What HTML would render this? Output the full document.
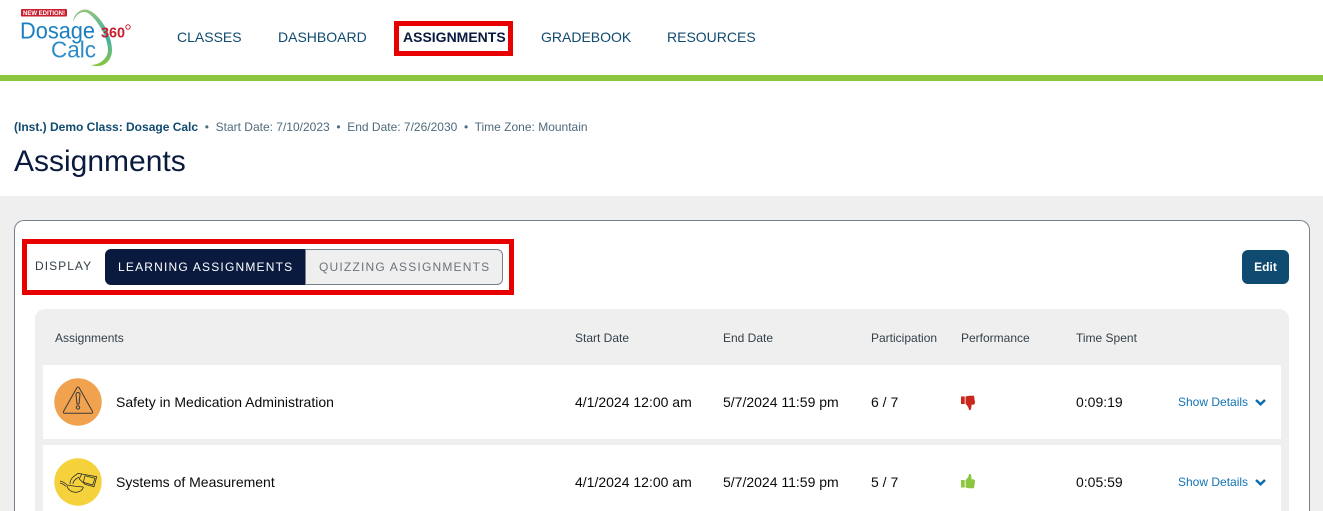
<!DOCTYPE html>
<html>
<head>
<meta charset="utf-8">
<style>
html,body{margin:0;padding:0;background:#fff;width:1323px;height:511px;overflow:hidden}
#w{position:relative;width:1323px;height:511px;overflow:hidden;font-family:"Liberation Sans",sans-serif;background:#fff}
.a{position:absolute;white-space:nowrap}
.nav{top:29px;font-size:14px;line-height:16px;color:#0f4a70}
.th{top:331px;font-size:12px;line-height:14px;color:#333f48}
.td{font-size:14px;line-height:16px;color:#0a0a0a}
.sd{font-size:12px;line-height:14px;color:#1273b5}
</style>
</head>
<body>
<div id="w">
<svg class="a" style="left:15px;top:5px" width="125" height="66" viewBox="15 5 125 66">
<defs>
<linearGradient id="g1" x1="0" y1="0" x2="0" y2="1"><stop offset="0" stop-color="#94c47c"/><stop offset=".5" stop-color="#3fb0a8"/><stop offset="1" stop-color="#8cc63f"/></linearGradient>
</defs>
<rect x="21" y="9" width="46" height="7.500" rx="1" fill="#c8202f"/>
<text x="23" y="15" font-family="Liberation Sans" font-size="6" font-weight="bold" fill="#fff" textLength="42">NEW EDITION!</text>
<path d="M73 22C74 13 82 8 88 10C100 14 112 35 112 50C112 62 102 69 91 65C100 65 108 58 108 50C108 38 98 20 88 13C82 10 76 14 73 22Z" fill="url(#g1)"/>
<text x="20" y="38.500" font-family="Liberation Sans" font-size="23" fill="#1b7ec2" textLength="75" lengthAdjust="spacingAndGlyphs">Dosage</text>
<text x="51" y="57.500" font-family="Liberation Sans" font-size="23" fill="#2b8cc8" textLength="45" lengthAdjust="spacingAndGlyphs">Calc</text>
<text x="101" y="37.500" font-family="Liberation Sans" font-size="14.500" font-weight="bold" fill="#c8202f" textLength="24" lengthAdjust="spacingAndGlyphs">360</text>
<circle cx="128" cy="27" r="2.200" fill="none" stroke="#c8202f" stroke-width="1"/>
</svg>

<div class="a nav" style="left:177px">CLASSES</div>
<div class="a nav" style="left:278px">DASHBOARD</div>
<div class="a" style="left:394px;top:21px;width:109px;height:25px;border:5px solid #e60000"></div>
<div class="a nav" style="left:403px;font-weight:bold;color:#0a1a3f">ASSIGNMENTS</div>
<div class="a nav" style="left:541px">GRADEBOOK</div>
<div class="a nav" style="left:667px">RESOURCES</div>
<div class="a" style="left:0;top:75px;width:1323px;height:6px;background:#8cc63f"></div>

<div class="a" style="left:14px;top:120px;font-size:12px;line-height:14px;color:#4f6a7d"><b style="color:#0f4a70">(Inst.) Demo Class: Dosage Calc</b>&nbsp; •&nbsp; Start Date: 7/10/2023&nbsp; •&nbsp; End Date: 7/26/2030&nbsp; •&nbsp; Time Zone: Mountain</div>
<div class="a" style="left:14px;top:145px;font-size:30px;line-height:34px;color:#0a1a3f">Assignments</div>

<div class="a" style="left:0;top:196px;width:1323px;height:315px;background:#efefef"></div>
<div class="a" style="left:14px;top:220px;width:1294px;height:290px;background:#fff;border:1px solid #75828c;border-bottom:none;border-radius:10px 10px 0 0"></div>

<div class="a" style="left:22px;top:239px;width:482px;height:46px;border:5px solid #e60000"></div>
<div class="a" style="left:35px;top:259px;font-size:12px;line-height:14px;letter-spacing:1.050px;color:#333f48">DISPLAY</div>
<div class="a" style="left:105px;top:249px;width:200px;height:36px;background:#0a1a3f;border-radius:6px 0 0 6px"></div>
<div class="a" style="left:118px;top:249px;color:#fff;font-size:12px;line-height:36px;letter-spacing:1.200px">LEARNING ASSIGNMENTS</div>
<div class="a" style="left:305px;top:249px;width:196px;height:34px;background:#efefef;border:1px solid #75828c;border-radius:0 6px 6px 0"></div>
<div class="a" style="left:319px;top:250px;color:#6a747c;font-size:12px;line-height:34px;letter-spacing:1.200px">QUIZZING ASSIGNMENTS</div>

<div class="a" style="left:1242px;top:250px;width:47px;height:34px;background:#0f4a70;border-radius:6px;color:#fff;font-size:12px;font-weight:bold;line-height:34px;text-align:center">Edit</div>

<div class="a" style="left:35px;top:309px;width:1254px;height:202px;background:#efefef;border-radius:10px 10px 0 0"></div>
<div class="a th" style="left:55px">Assignments</div>
<div class="a th" style="left:575px">Start Date</div>
<div class="a th" style="left:723px">End Date</div>
<div class="a th" style="left:871px">Participation</div>
<div class="a th" style="left:961px">Performance</div>
<div class="a th" style="left:1076px">Time Spent</div>

<div class="a" style="left:43px;top:365px;width:1238px;height:74px;background:#fff"></div>
<div class="a" style="left:43px;top:445px;width:1238px;height:66px;background:#fff"></div>

<svg class="a" style="left:54px;top:378px" width="48" height="48" viewBox="0 0 48 48">
<circle cx="24" cy="24" r="23.700" fill="#f0a24e"/>
<path d="M23 9.500a1.200 1.200 0 0 1 2 0L38.500 33.500a1.200 1.200 0 0 1-1 1.800H10.500a1.200 1.200 0 0 1-1-1.800Z" fill="none" stroke="#3a3a3a" stroke-width="1"/>
<path d="M22 16.500a2 2 0 0 1 4 0L25 26h-2Z" fill="none" stroke="#3a3a3a" stroke-width="1"/>
<circle cx="24" cy="29.500" r="1.700" fill="none" stroke="#3a3a3a" stroke-width="1"/>
</svg>
<div class="a td" style="left:116px;top:394px">Safety in Medication Administration</div>
<div class="a td" style="left:575px;top:394px">4/1/2024 12:00 am</div>
<div class="a td" style="left:723px;top:394px">5/7/2024 11:59 pm</div>
<div class="a td" style="left:871px;top:394px">6 / 7</div>
<svg class="a" style="left:961px;top:395px" width="15" height="16" viewBox="0 0 15 16">
<path d="M0 1.500h3.500V9H0Z" fill="#c8281c"/><path d="M3.500 1.500h1.500V9H3.500Z" fill="#e8a090"/>
<path d="M5 1.500C6.500 .8 9 .6 11 .8H13L14 7.500C14 9 13 9.800 11.500 9.800H10.500C10.500 12 10.300 14 9.500 15C8.500 15.500 8 15 7.800 14C7.500 12.500 6.500 10.500 5 9.500Z" fill="#c8281c"/>
</svg>
<div class="a td" style="left:1076px;top:394px">0:09:19</div>
<div class="a sd" style="left:1178px;top:395px">Show Details</div>
<svg class="a" style="left:1254px;top:398px" width="13" height="9" viewBox="0 0 13 9"><path d="M2 2L6.500 6.300L11 2" fill="none" stroke="#0f6cab" stroke-width="2.500"/></svg>

<svg class="a" style="left:54px;top:458px" width="48" height="48" viewBox="0 0 48 48">
<circle cx="24" cy="24" r="23.700" fill="#f5d23c"/>
<g fill="none" stroke="#2d2d2d" stroke-width=".8">
<path d="M6 23C9 23.500 11 25 13 27C18 28 24 28.500 29 29"/>
<path d="M6 25C8.500 25.500 10 26.500 12 28.500"/>
<path d="M13 28C14 32 18 34.500 22 34.300C26 34 28.500 32 29.500 29"/>
<path d="M16 26C16 23 17 21 19 19L24 15.300L28 16"/>
<path d="M19 26C19 24 20 22.500 22 21L25 19"/>
<path d="M27.700 16L42.700 18.700L40 28.700L31 26.300L25.300 21Z"/>
<path d="M31 17.700L41 20.300L38.700 27L29.300 24.300Z"/>
</g>
</svg>
<div class="a td" style="left:116px;top:474px">Systems of Measurement</div>
<div class="a td" style="left:575px;top:474px">4/1/2024 12:00 am</div>
<div class="a td" style="left:723px;top:474px">5/7/2024 11:59 pm</div>
<div class="a td" style="left:871px;top:474px">5 / 7</div>
<svg class="a" style="left:961px;top:474px" width="15" height="16" viewBox="0 0 15 16">
<g transform="matrix(1 0 0 -1 0 15)">
<path d="M0 1.500h3.500V9H0Z" fill="#8cc63f"/><path d="M3.500 1.500h1.500V9H3.500Z" fill="#d0e8a8"/>
<path d="M5 1.500C6.500 .8 9 .6 11 .8H13L14 7.500C14 9 13 9.800 11.500 9.800H10.500C10.500 12 10.300 14 9.500 15C8.500 15.500 8 15 7.800 14C7.500 12.500 6.500 10.500 5 9.500Z" fill="#8cc63f"/>
</g>
</svg>
<div class="a td" style="left:1076px;top:474px">0:05:59</div>
<div class="a sd" style="left:1178px;top:475px">Show Details</div>
<svg class="a" style="left:1254px;top:478px" width="13" height="9" viewBox="0 0 13 9"><path d="M2 2L6.500 6.300L11 2" fill="none" stroke="#0f6cab" stroke-width="2.500"/></svg>
</div>
</body>
</html>
